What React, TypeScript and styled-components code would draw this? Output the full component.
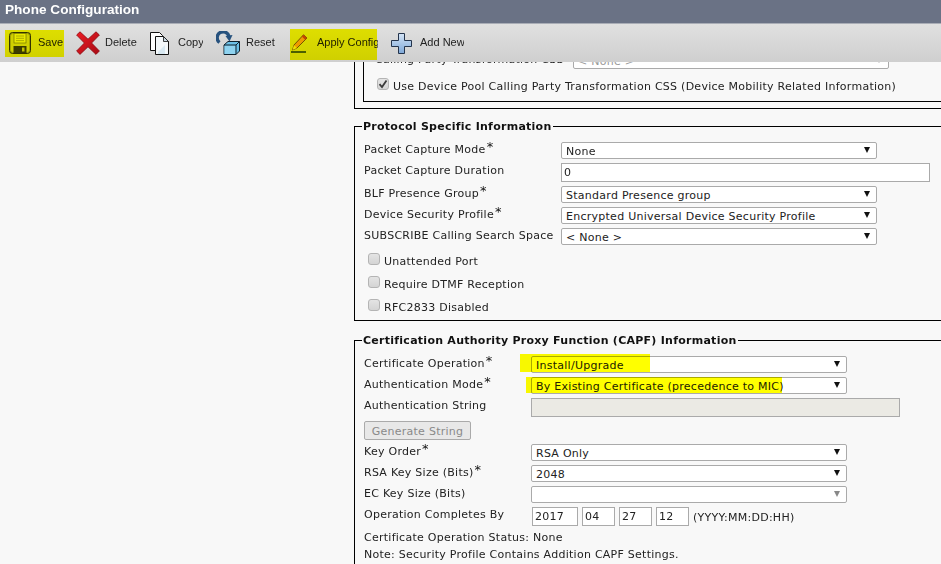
import React from 'react';
import styled, { createGlobalStyle } from 'styled-components';

const GlobalStyle = createGlobalStyle`
  html, body {
    margin: 0;
    padding: 0;
    background: #f8f8f8;
  }
`;

const Page = styled.div`
  width: 941px;
  height: 564px;
  overflow: hidden;
  display: flex;
  flex-direction: column;
  background: #f8f8f8;
  font-family: 'DejaVu Sans', Verdana, sans-serif;
  font-size: 11px;
  letter-spacing: 0.26px;
  color: #222;
`;

const TitleBar = styled.div`
  flex: none;
  height: 23px;
  padding-left: 5px;
  background: #6a7285;
  border-bottom: 1px solid #a9adb6;
  color: #fff;
  font-family: 'Liberation Sans', Arial, sans-serif;
  font-size: 13.6px;
  font-weight: bold;
  letter-spacing: 0;
  line-height: 19px;
`;

const Toolbar = styled.div`
  flex: none;
  position: relative;
  height: 38px;
  padding-left: 9px;
  display: flex;
  align-items: center;
  gap: 13px;
  background: linear-gradient(#e0e0e0, #cfcfcf);
  font-family: 'Liberation Sans', Arial, sans-serif;
  font-size: 11px;
  letter-spacing: 0;
  color: #222;
`;

const ToolButton = styled.div<{ $width: number }>`
  width: ${(p) => p.$width}px;
  display: flex;
  align-items: center;
  white-space: nowrap;
  overflow: hidden;
`;

const ToolText = styled.span`
  padding-bottom: 2px;
`;

const IconSlot = styled.span<{ $width: number }>`
  flex: none;
  width: ${(p) => p.$width}px;
  height: 24px;
  display: flex;
  align-items: center;
`;

const Mark = styled.span<{ $left: number; $top: number; $width: number; $height: number }>`
  position: absolute;
  left: ${(p) => p.$left}px;
  top: ${(p) => p.$top}px;
  width: ${(p) => p.$width}px;
  height: ${(p) => p.$height}px;
  background: #ffff00;
  mix-blend-mode: multiply;
  pointer-events: none;
`;

const Content = styled.div`
  flex: 1;
  min-height: 0;
  overflow: hidden;
  padding-left: 354px;
`;

const Column = styled.div`
  width: 640px;
`;

const OuterFrame = styled.div`
  margin-top: -10px;
  padding: 0 0 6px 8px;
  border: 1px solid #000;
  border-top: none;
`;

const InnerFrame = styled.div`
  padding: 0 0 8px 11px;
  border: 1px solid #000;
  border-top: none;
`;

const Section = styled.fieldset`
  margin: 11px 0 0;
  padding: 9px 0 6px 9px;
  border: 1px solid #000;
  min-width: 0;
`;

const CapfSection = styled(Section)`
  margin-top: 13px;
`;

const Legend = styled.legend`
  margin-left: -2px;
  padding: 0 1px;
  font-weight: bold;
  font-size: 11px;
  line-height: 13px;
  color: #111;
`;

const Rows = styled.div`
  display: flex;
  flex-direction: column;
  gap: 4px;
`;

const Row = styled.div`
  position: relative;
  display: flex;
  align-items: center;
`;

const Label = styled.div<{ $width: number; $raised?: boolean }>`
  flex: none;
  width: ${(p) => p.$width}px;
  padding-bottom: ${(p) => (p.$raised ? 5 : 3)}px;
  white-space: nowrap;
`;

const Star = styled.sup`
  font-size: 13px;
  line-height: 0;
  margin-left: 1px;
  vertical-align: 2px;
  color: #111;
`;

const SelectBox = styled.div<{ $width?: number; $disabled?: boolean }>`
  position: relative;
  box-sizing: border-box;
  flex: none;
  width: ${(p) => p.$width ?? 316}px;
  height: 17px;
  padding-left: 4px;
  line-height: 17px;
  background: #fff;
  border: 1px solid #aaa;
  border-radius: 2px;
  color: ${(p) => (p.$disabled ? '#999' : '#222')};
  white-space: nowrap;

  &::after {
    content: '';
    position: absolute;
    right: 6px;
    top: 4px;
    border-left: 3.5px solid transparent;
    border-right: 3.5px solid transparent;
    border-top: 6px solid ${(p) => (p.$disabled ? '#888' : '#111')};
  }
`;

const TextField = styled.input<{ $width: number; $disabled?: boolean }>`
  box-sizing: border-box;
  flex: none;
  width: ${(p) => p.$width}px;
  height: 19px;
  margin: 0;
  padding: 0 2px;
  font: inherit;
  letter-spacing: inherit;
  color: #222;
  background: ${(p) => (p.$disabled ? '#ebeae4' : '#fff')};
  border: 1px solid #aaa;
  border-radius: 0;
  outline: none;
`;

const DateFields = styled.div`
  display: flex;
  align-items: center;
  gap: 4px;
  margin-left: 1px;
`;

const Hint = styled.span`
  margin-top: 1px;
`;

const GenerateButton = styled.button`
  box-sizing: border-box;
  width: 107px;
  height: 19px;
  margin: 0;
  padding: 1px 0 0;
  font: inherit;
  letter-spacing: inherit;
  color: #8a8a8a;
  background: #e8e8e8;
  border: 1px solid #aaa;
  border-radius: 2px;
`;

const Checks = styled.div`
  display: flex;
  flex-direction: column;
  gap: 9px;
  margin: 9px 0 0 4px;
`;

const CheckRow = styled.div`
  display: flex;
  align-items: center;
  gap: 4px;
  height: 14px;
`;

const CheckBox = styled.span`
  flex: none;
  box-sizing: border-box;
  width: 12px;
  height: 12px;
  margin-top: -5px;
  display: flex;
  align-items: center;
  justify-content: center;
  border: 1px solid #b4b4b4;
  border-radius: 3px;
  background: linear-gradient(#e4e4e4, #d4d4d4);
`;

const UseDeviceCheck = styled(CheckRow)`
  margin-left: 2px;
`;

const StatusText = styled.div`
  height: 17px;
  line-height: 17px;
`;

const StatusBlock = styled.div`
  margin-top: 3px;
`;

const ClippedRow = styled(Row)`
  height: 17px;
  margin-bottom: 10px;
`;

const SaveIcon = () => (
  <svg width="22" height="22" viewBox="0 0 22 22">
    <rect x="0.5" y="0.5" width="21" height="21" rx="3" fill="#a5a500" stroke="#33330a" />
    <rect x="2" y="2" width="18" height="18" rx="2" fill="#d0d000" />
    <rect x="5" y="1.5" width="12" height="9.5" fill="#eaea40" stroke="#77770a" strokeWidth="0.7" />
    <path d="M7 4h8M7 6.3h8M7 8.6h8" stroke="#a0a010" strokeWidth="0.8" />
    <rect x="4.5" y="14" width="13" height="7" fill="#3c3c08" />
    <rect x="13" y="15.5" width="2.5" height="4" fill="#c2c200" />
  </svg>
);

const DeleteIcon = () => (
  <svg width="24" height="24" viewBox="0 0 24 24">
    <defs>
      <linearGradient id="del" x1="0" y1="0" x2="1" y2="1">
        <stop offset="0" stopColor="#ee1c25" />
        <stop offset="1" stopColor="#a80a14" />
      </linearGradient>
    </defs>
    <path
      d="M4 .8 12 8.2 20 .8 23.4 4 15.6 12 23.4 20 20 23.4 12 15.8 4 23.4.6 20 8.4 12 .6 4Z"
      fill="url(#del)"
      stroke="#8a0a10"
      strokeWidth="0.8"
    />
  </svg>
);

const CopyIcon = () => (
  <svg width="19" height="23" viewBox="0 0 19 23">
    <path d="M.5.5h9l3 3v15H.5Z" fill="#fff" stroke="#111" />
    <path d="M5.5 4.5h8l5 5v13h-13Z" fill="#f4f8fa" stroke="#111" />
    <path d="M13.5 4.5v5h5Z" fill="#c9d8e2" stroke="#111" strokeWidth="0.8" />
    <path d="M8 20l7-7v9H8Z" fill="#d9e9f2" />
  </svg>
);

const ResetIcon = () => (
  <svg width="24" height="24" viewBox="0 0 24 24">
    <path d="M8 14 12 10.5H23.5V20L20 23.5H8Z" fill="#6cc0e6" stroke="#10202c" />
    <rect x="8.5" y="14.5" width="11" height="8.5" fill="#8fd3f0" />
    <path d="M8 14H20V23.5M20 14 23.5 10.5" fill="none" stroke="#10202c" />
    <path d="M3.5 11.5A6 6 0 1 1 13 5.5" fill="none" stroke="#27527e" strokeWidth="3.4" />
    <path d="M9.5 5 16.5 4 13.5 10.5Z" fill="#27527e" />
  </svg>
);

const PencilIcon = () => (
  <svg width="17" height="19" viewBox="0 0 17 19">
    <path d="M0 18h15" stroke="#3d5200" strokeWidth="1.8" />
    <path d="M12.5.8 16 4 6 14 1.5 16 3 11Z" fill="#ee9a14" stroke="#553a00" strokeWidth="0.8" />
    <path d="M12.5.8 16 4 14.2 5.8 10.8 2.6Z" fill="#c2470f" />
    <path d="M3 11 1.5 16 6 14Z" fill="#f0dc90" />
  </svg>
);

const AddIcon = () => (
  <svg width="21" height="21" viewBox="0 0 21 21">
    <defs>
      <linearGradient id="add" x1="0" y1="0" x2="0" y2="1">
        <stop offset="0" stopColor="#d4e4f6" />
        <stop offset="1" stopColor="#7ea8d8" />
      </linearGradient>
    </defs>
    <path d="M7.5.5h6v7h7v6h-7v7h-6v-7h-7v-6h7Z" fill="url(#add)" stroke="#24344c" />
  </svg>
);

const CheckMark = () => (
  <svg width="10" height="10" viewBox="0 0 10 10">
    <path d="M1.5 5.2 4 8 8.5 1.5" fill="none" stroke="#3a3a3a" strokeWidth="1.8" />
  </svg>
);

const tools = [
  { text: 'Save', width: 54, slot: 29, icon: <SaveIcon /> },
  { text: 'Delete', width: 61, slot: 29, icon: <DeleteIcon /> },
  { text: 'Copy', width: 53, slot: 28, icon: <CopyIcon /> },
  { text: 'Reset', width: 62, slot: 30, icon: <ResetIcon /> },
  { text: 'Apply Config', width: 87, slot: 26, icon: <PencilIcon /> },
  { text: 'Add New', width: 73, slot: 29, icon: <AddIcon /> },
];

const SELECT_X = 197;
const CAPF_X = 167;

export default function App() {
  return (
    <Page>
      <GlobalStyle />
      <TitleBar>Phone Configuration</TitleBar>
      <Toolbar>
        {tools.map((t) => (
          <ToolButton key={t.text} $width={t.width}>
            <IconSlot $width={t.slot}>{t.icon}</IconSlot>
            <ToolText>{t.text}</ToolText>
          </ToolButton>
        ))}
        <Mark $left={5} $top={6} $width={59} $height={27} />
        <Mark $left={290} $top={5} $width={87} $height={31} />
      </Toolbar>
      <Content>
        <Column>
          <OuterFrame>
            <InnerFrame>
              <ClippedRow>
                <Label $width={198}>Calling Party Transformation CSS</Label>
                <SelectBox $disabled>&lt; None &gt;</SelectBox>
              </ClippedRow>
              <UseDeviceCheck>
                <CheckBox>
                  <CheckMark />
                </CheckBox>
                Use Device Pool Calling Party Transformation CSS (Device Mobility Related Information)
              </UseDeviceCheck>
            </InnerFrame>
          </OuterFrame>

          <Section>
            <Legend>Protocol Specific Information</Legend>
            <Rows>
              <Row>
                <Label $width={SELECT_X}>
                  Packet Capture Mode<Star>*</Star>
                </Label>
                <SelectBox>None</SelectBox>
              </Row>
              <Row>
                <Label $width={SELECT_X} $raised>Packet Capture Duration</Label>
                <TextField $width={369} readOnly value="0" />
              </Row>
              <Row>
                <Label $width={SELECT_X}>
                  BLF Presence Group<Star>*</Star>
                </Label>
                <SelectBox>Standard Presence group</SelectBox>
              </Row>
              <Row>
                <Label $width={SELECT_X}>
                  Device Security Profile<Star>*</Star>
                </Label>
                <SelectBox>Encrypted Universal Device Security Profile</SelectBox>
              </Row>
              <Row>
                <Label $width={SELECT_X}>SUBSCRIBE Calling Search Space</Label>
                <SelectBox>&lt; None &gt;</SelectBox>
              </Row>
            </Rows>
            <Checks>
              <CheckRow>
                <CheckBox />
                Unattended Port
              </CheckRow>
              <CheckRow>
                <CheckBox />
                Require DTMF Reception
              </CheckRow>
              <CheckRow>
                <CheckBox />
                RFC2833 Disabled
              </CheckRow>
            </Checks>
          </Section>

          <CapfSection>
            <Legend>Certification Authority Proxy Function (CAPF) Information</Legend>
            <Rows>
              <Row>
                <Label $width={CAPF_X}>
                  Certificate Operation<Star>*</Star>
                </Label>
                <SelectBox>Install/Upgrade</SelectBox>
                <Mark $left={156} $top={-2} $width={130} $height={18} />
              </Row>
              <Row>
                <Label $width={CAPF_X}>
                  Authentication Mode<Star>*</Star>
                </Label>
                <SelectBox>By Existing Certificate (precedence to MIC)</SelectBox>
                <Mark $left={162} $top={0} $width={256} $height={16} />
              </Row>
              <Row>
                <Label $width={CAPF_X} $raised>Authentication String</Label>
                <TextField $width={369} $disabled readOnly value="" />
              </Row>
              <Row>
                <GenerateButton disabled>Generate String</GenerateButton>
              </Row>
              <Row>
                <Label $width={CAPF_X}>
                  Key Order<Star>*</Star>
                </Label>
                <SelectBox>RSA Only</SelectBox>
              </Row>
              <Row>
                <Label $width={CAPF_X}>
                  RSA Key Size (Bits)<Star>*</Star>
                </Label>
                <SelectBox>2048</SelectBox>
              </Row>
              <Row>
                <Label $width={CAPF_X}>EC Key Size (Bits)</Label>
                <SelectBox $disabled />
              </Row>
              <Row>
                <Label $width={CAPF_X} $raised>Operation Completes By</Label>
                <DateFields>
                  <TextField $width={46} readOnly value="2017" />
                  <TextField $width={33} readOnly value="04" />
                  <TextField $width={33} readOnly value="27" />
                  <TextField $width={33} readOnly value="12" />
                  <Hint>(YYYY:MM:DD:HH)</Hint>
                </DateFields>
              </Row>
            </Rows>
            <StatusBlock>
              <StatusText>Certificate Operation Status: None</StatusText>
              <StatusText>Note: Security Profile Contains Addition CAPF Settings.</StatusText>
            </StatusBlock>
          </CapfSection>
        </Column>
      </Content>
    </Page>
  );
}
